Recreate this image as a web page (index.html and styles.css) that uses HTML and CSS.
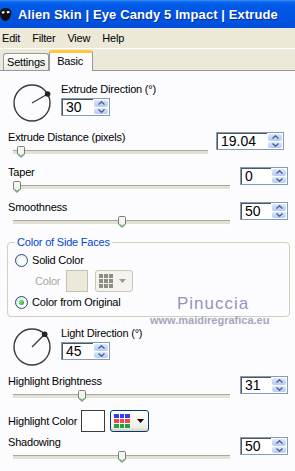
FILE: index.html
```html
<!DOCTYPE html>
<html>
<head>
  <meta charset="utf-8">
  <link rel="stylesheet" href="styles.css">
</head>
<body>
  <div class="titlebar">
    <svg class="app-icon" width="13" height="16" viewBox="0 0 13 16">
      <path d="M0 7 C0 3 3 2 6 2 C10 2 12 5 11 9 C10 12 8 15 5 15 C2 15 0 11 0 7 Z" fill="#111"/>
      <path d="M1.5 6.5 C2.5 5 4 5 5 6 L3 8 Z" fill="#fff"/>
      <path d="M6.5 5.5 C8 4.5 9.5 5 10 6.5 L7.5 7.5 Z" fill="#fff"/>
    </svg>
    <span class="title">Alien Skin | Eye Candy 5 Impact | Extrude</span>
  </div>

  <div class="menubar">
    <span>Edit</span>
    <span>Filter</span>
    <span>View</span>
    <span>Help</span>
  </div>

  <div class="tabs">
    <div class="tab">Settings</div>
    <div class="tab active">Basic</div>
  </div>

  <div class="panel">
    <div class="dial-row">
      <svg class="dial" width="40" height="40" viewBox="0 0 40 40">
        <circle cx="20" cy="20" r="18" fill="none" stroke="#3a3a3a" stroke-width="1.4"/>
        <line x1="20" y1="20" x2="35.6" y2="11" stroke="#3a3a3a" stroke-width="1.3"/>
        <circle cx="35.6" cy="11" r="2.8" fill="#222"/>
      </svg>
      <div class="dial-fields">
        <div class="label">Extrude Direction (°)</div>
        <div class="spin">
          <span class="spin-value">30</span>
          <span class="spin-btns">
            <span><svg width="7" height="4" viewBox="0 0 7 4"><polyline points="0.5,3.5 3.5,0.8 6.5,3.5" fill="none" stroke="#4D6185" stroke-width="1.4"/></svg></span>
            <span><svg width="7" height="4" viewBox="0 0 7 4"><polyline points="0.5,0.5 3.5,3.2 6.5,0.5" fill="none" stroke="#4D6185" stroke-width="1.4"/></svg></span>
          </span>
        </div>
      </div>
    </div>

    <div class="param wide">
      <div class="label">Extrude Distance (pixels)</div>
      <div class="slider"><span class="thumb" style="left: calc((100% - 8px) * 0.019)"><svg width="8" height="12" viewBox="0 0 8 12"><path d="M0.5 1.5 Q0.5 0.5 1.5 0.5 H6.5 Q7.5 0.5 7.5 1.5 V8 L4 11.5 L0.5 8 Z" fill="#F4F4F0" stroke="#7C7C7C"/><polyline points="1.5,8.2 4,10.4 6.5,8.2" fill="none" stroke="#2EA62E"/></svg></span></div>
      <div class="spin">
        <span class="spin-value">19.04</span>
        <span class="spin-btns">
          <span><svg width="7" height="4" viewBox="0 0 7 4"><polyline points="0.5,3.5 3.5,0.8 6.5,3.5" fill="none" stroke="#4D6185" stroke-width="1.4"/></svg></span>
          <span><svg width="7" height="4" viewBox="0 0 7 4"><polyline points="0.5,0.5 3.5,3.2 6.5,0.5" fill="none" stroke="#4D6185" stroke-width="1.4"/></svg></span>
        </span>
      </div>
    </div>

    <div class="param">
      <div class="label">Taper</div>
      <div class="slider"><span class="thumb" style="left: calc((100% - 8px) * 0)"><svg width="8" height="12" viewBox="0 0 8 12"><path d="M0.5 1.5 Q0.5 0.5 1.5 0.5 H6.5 Q7.5 0.5 7.5 1.5 V8 L4 11.5 L0.5 8 Z" fill="#F4F4F0" stroke="#7C7C7C"/><polyline points="1.5,8.2 4,10.4 6.5,8.2" fill="none" stroke="#2EA62E"/></svg></span></div>
      <div class="spin">
        <span class="spin-value">0</span>
        <span class="spin-btns">
          <span><svg width="7" height="4" viewBox="0 0 7 4"><polyline points="0.5,3.5 3.5,0.8 6.5,3.5" fill="none" stroke="#4D6185" stroke-width="1.4"/></svg></span>
          <span><svg width="7" height="4" viewBox="0 0 7 4"><polyline points="0.5,0.5 3.5,3.2 6.5,0.5" fill="none" stroke="#4D6185" stroke-width="1.4"/></svg></span>
        </span>
      </div>
    </div>

    <div class="param">
      <div class="label">Smoothness</div>
      <div class="slider"><span class="thumb" style="left: calc((100% - 8px) * 0.5)"><svg width="8" height="12" viewBox="0 0 8 12"><path d="M0.5 1.5 Q0.5 0.5 1.5 0.5 H6.5 Q7.5 0.5 7.5 1.5 V8 L4 11.5 L0.5 8 Z" fill="#F4F4F0" stroke="#7C7C7C"/><polyline points="1.5,8.2 4,10.4 6.5,8.2" fill="none" stroke="#2EA62E"/></svg></span></div>
      <div class="spin">
        <span class="spin-value">50</span>
        <span class="spin-btns">
          <span><svg width="7" height="4" viewBox="0 0 7 4"><polyline points="0.5,3.5 3.5,0.8 6.5,3.5" fill="none" stroke="#4D6185" stroke-width="1.4"/></svg></span>
          <span><svg width="7" height="4" viewBox="0 0 7 4"><polyline points="0.5,0.5 3.5,3.2 6.5,0.5" fill="none" stroke="#4D6185" stroke-width="1.4"/></svg></span>
        </span>
      </div>
    </div>

    <fieldset class="group">
      <legend>Color of Side Faces</legend>
      <div class="radio-row">
        <span class="radio"></span>
        <span>Solid Color</span>
      </div>
      <div class="color-row">
        <span class="muted">Color</span>
        <span class="swatch"></span>
        <span class="picker">
          <span class="grid-icon">
            <i></i><i></i><i></i><i></i><i></i><i></i><i></i><i></i><i></i>
          </span>
          <svg class="caret" width="7" height="4" viewBox="0 0 7 4"><path d="M0 0 H7 L3.5 4 Z" fill="#9C9A90"/></svg>
        </span>
      </div>
      <div class="radio-row">
        <span class="radio checked"></span>
        <span>Color from Original</span>
      </div>
    </fieldset>

    <div class="dial-row second">
      <svg class="dial" width="40" height="40" viewBox="0 0 40 40">
        <circle cx="20" cy="20" r="18" fill="none" stroke="#3a3a3a" stroke-width="1.4"/>
        <line x1="20" y1="20" x2="32.7" y2="7.3" stroke="#3a3a3a" stroke-width="1.3"/>
        <circle cx="32.7" cy="7.3" r="2.8" fill="#222"/>
      </svg>
      <div class="dial-fields">
        <div class="label">Light Direction (°)</div>
        <div class="spin">
          <span class="spin-value">45</span>
          <span class="spin-btns">
            <span><svg width="7" height="4" viewBox="0 0 7 4"><polyline points="0.5,3.5 3.5,0.8 6.5,3.5" fill="none" stroke="#4D6185" stroke-width="1.4"/></svg></span>
            <span><svg width="7" height="4" viewBox="0 0 7 4"><polyline points="0.5,0.5 3.5,3.2 6.5,0.5" fill="none" stroke="#4D6185" stroke-width="1.4"/></svg></span>
          </span>
        </div>
      </div>
    </div>

    <div class="param">
      <div class="label">Highlight Brightness</div>
      <div class="slider"><span class="thumb" style="left: calc((100% - 8px) * 0.31)"><svg width="8" height="12" viewBox="0 0 8 12"><path d="M0.5 1.5 Q0.5 0.5 1.5 0.5 H6.5 Q7.5 0.5 7.5 1.5 V8 L4 11.5 L0.5 8 Z" fill="#F4F4F0" stroke="#7C7C7C"/><polyline points="1.5,8.2 4,10.4 6.5,8.2" fill="none" stroke="#2EA62E"/></svg></span></div>
      <div class="spin">
        <span class="spin-value">31</span>
        <span class="spin-btns">
          <span><svg width="7" height="4" viewBox="0 0 7 4"><polyline points="0.5,3.5 3.5,0.8 6.5,3.5" fill="none" stroke="#4D6185" stroke-width="1.4"/></svg></span>
          <span><svg width="7" height="4" viewBox="0 0 7 4"><polyline points="0.5,0.5 3.5,3.2 6.5,0.5" fill="none" stroke="#4D6185" stroke-width="1.4"/></svg></span>
        </span>
      </div>
    </div>

    <div class="color-field">
      <span class="label">Highlight Color</span>
      <span class="swatch white"></span>
      <span class="picker active">
        <span class="grid-icon colored">
          <i></i><i></i><i></i><i></i><i></i><i></i><i></i><i></i><i></i>
        </span>
        <svg class="caret" width="7" height="4" viewBox="0 0 7 4"><path d="M0 0 H7 L3.5 4 Z" fill="#000"/></svg>
      </span>
    </div>

    <div class="param tight">
      <div class="label">Shadowing</div>
      <div class="slider"><span class="thumb" style="left: calc((100% - 8px) * 0.5)"><svg width="8" height="12" viewBox="0 0 8 12"><path d="M0.5 1.5 Q0.5 0.5 1.5 0.5 H6.5 Q7.5 0.5 7.5 1.5 V8 L4 11.5 L0.5 8 Z" fill="#F4F4F0" stroke="#7C7C7C"/><polyline points="1.5,8.2 4,10.4 6.5,8.2" fill="none" stroke="#2EA62E"/></svg></span></div>
      <div class="spin">
        <span class="spin-value">50</span>
        <span class="spin-btns">
          <span><svg width="7" height="4" viewBox="0 0 7 4"><polyline points="0.5,3.5 3.5,0.8 6.5,3.5" fill="none" stroke="#4D6185" stroke-width="1.4"/></svg></span>
          <span><svg width="7" height="4" viewBox="0 0 7 4"><polyline points="0.5,0.5 3.5,3.2 6.5,0.5" fill="none" stroke="#4D6185" stroke-width="1.4"/></svg></span>
        </span>
      </div>
    </div>

    <div class="watermark">
      <div class="wm-name">Pinuccia</div>
      <div class="wm-url">www.maidiregrafica.eu</div>
    </div>
  </div>
</body>
</html>
```

FILE: styles.css
```css
* {
  margin: 0;
  padding: 0;
  box-sizing: border-box;
}

body {
  width: 295px;
  height: 471px;
  overflow: hidden;
  display: flex;
  flex-direction: column;
  font-family: 'Liberation Sans', Arial, sans-serif;
  font-size: 11px;
  letter-spacing: -0.2px;
  color: #000;
  background: #ECE9D8;
}

/* window chrome */

.titlebar {
  flex: none;
  height: 28px;
  display: flex;
  align-items: center;
  gap: 5px;
  background: linear-gradient(to bottom, #3D8EF8 0, #0A66EE 2px, #0058E6 7px, #0054E3 60%, #004FD9 100%);
  color: #fff;
}

.app-icon {
  flex: none;
}

.title {
  font-size: 13px;
  font-weight: 700;
  letter-spacing: 0.1px;
  text-shadow: 1px 1px 0 rgba(8, 30, 120, 0.7);
}

.menubar {
  flex: none;
  height: 21px;
  display: flex;
  align-items: center;
  gap: 12px;
  padding-left: 2px;
  border-bottom: 1px solid #fff;
}

.tabs {
  flex: none;
  height: 22px;
  display: flex;
  align-items: flex-end;
  padding-left: 3px;
  border-bottom: 1px solid #919B9C;
}

.tab {
  height: 17px;
  padding: 0 3px;
  line-height: 16px;
  border: 1px solid #919B9C;
  border-bottom: none;
  border-radius: 3px 3px 0 0;
  background: linear-gradient(#fff, #ECEBE6);
}

.tab.active {
  height: 21px;
  margin-bottom: -1px;
  padding: 0 9px 0 7px;
  border-top: 3px solid #FFC83C;
  background: #FCFCFE;
}

/* tab page */

.panel {
  flex: 1;
  position: relative;
  padding: 11px 7px 0 8px;
  background: #FCFCFE;
}

.label {
  line-height: 14px;
  white-space: nowrap;
}

.dial-row {
  display: flex;
  align-items: flex-start;
  gap: 9px;
}

.dial-row.second {
  margin-top: 9px;
}

.dial {
  flex: none;
  margin: 1px 0 0 4px;
}

.dial-fields {
  display: flex;
  flex-direction: column;
  gap: 2px;
}

.dial-fields .spin {
  width: 49px;
}

.param {
  display: grid;
  grid-template-columns: 1fr 48px;
  grid-template-rows: 14px 14px;
  column-gap: 10px;
  margin-top: 7px;
}

.param.wide {
  grid-template-columns: 1fr 68px;
  column-gap: 8px;
  padding-right: 4px;
}

.param.tight {
  margin-top: 3px;
}

.param .label {
  grid-column: 1;
  grid-row: 1;
}

.param .slider {
  grid-column: 1;
  grid-row: 2;
  margin-left: 5px;
}

.param .spin {
  grid-column: 2;
  grid-row: 1 / 3;
  margin-top: 2px;
}

/* spin box */

.spin {
  height: 18px;
  display: flex;
  border: 1px solid #7F9DB9;
  background: #fff;
}

.spin-value {
  flex: 1;
  padding-left: 3px;
  font-size: 14px;
  line-height: 15px;
  letter-spacing: 0;
  border-top: 1px solid #555;
  border-left: 1px solid #555;
}

.spin-btns {
  width: 16px;
  display: flex;
  flex-direction: column;
  gap: 1px;
  padding: 1px;
}

.spin-btns span {
  flex: 1;
  display: flex;
  align-items: center;
  justify-content: center;
  border-radius: 2px;
  background: linear-gradient(#DDE7FC, #B5C9F5);
}

.spin-btns svg {
  display: block;
}

/* trackbar */

.slider {
  position: relative;
  height: 14px;
}

.slider::before {
  content: '';
  position: absolute;
  left: 0;
  right: 0;
  top: 6px;
  height: 3px;
  border-top: 1px solid #A9A79C;
  border-bottom: 1px solid #fff;
  background: #E3E1D6;
}

.thumb {
  position: absolute;
  top: 2px;
}

.thumb svg {
  display: block;
}

/* group box */

.group {
  margin: 7px -2px 0 -1px;
  padding: 0 0 6px 7px;
  border: 1px solid #D0D0BF;
  border-radius: 4px;
}

.group legend {
  padding: 0 2px;
  line-height: 14px;
  color: #0046D5;
}

.radio-row {
  height: 16px;
  display: flex;
  align-items: center;
  gap: 4px;
  margin-top: 2px;
}

.group legend + .radio-row {
  margin-top: 3px;
}

.radio {
  width: 13px;
  height: 13px;
  display: flex;
  align-items: center;
  justify-content: center;
  border: 1px solid #1C5180;
  border-radius: 50%;
  background: radial-gradient(circle at 65% 65%, #fff 30%, #DCDCD4);
}

.radio.checked::after {
  content: '';
  width: 5px;
  height: 5px;
  border-radius: 50%;
  background: radial-gradient(circle at 35% 35%, #7BE77B, #1C961C);
}

.color-row {
  height: 22px;
  display: flex;
  align-items: center;
  margin-top: 2px;
  padding-left: 20px;
}

.muted {
  width: 31px;
  color: #ACA899;
}

.swatch {
  width: 22px;
  height: 22px;
  border: 1px solid #C4C2B6;
  background: #ECE9D8;
}

.picker {
  width: 38px;
  height: 22px;
  display: flex;
  align-items: center;
  margin-left: 7px;
  padding-left: 3px;
  border: 1px solid #CAC8BB;
  border-radius: 3px;
  background: #F4F3EE;
}

.grid-icon {
  width: 14px;
  height: 14px;
  display: grid;
  grid-template-columns: repeat(3, 4px);
  grid-template-rows: repeat(3, 4px);
  gap: 1px;
}

.grid-icon i {
  background: #8E8C85;
}

.caret {
  margin-left: 6px;
}

.color-field {
  height: 22px;
  display: flex;
  align-items: center;
  margin-top: 8px;
}

.color-field .label {
  width: 73px;
}

.swatch.white {
  width: 24px;
  border-color: #3C3C3C;
  background: #fff;
}

.picker.active {
  width: 39px;
  margin-left: 5px;
  padding-left: 3px;
  border-color: #003C74;
  background: linear-gradient(#fff, #F1EFE6 80%, #D8D2C2);
}

.grid-icon.colored {
  width: 16px;
  grid-template-columns: repeat(3, 4.6px);
}

.grid-icon.colored i:nth-child(-n+3) {
  background: #3A3AF5;
}

.grid-icon.colored i:nth-child(n+4) {
  background: #F04848;
}

.grid-icon.colored i:nth-child(n+7) {
  background: #22A04A;
}

.picker.active .caret {
  margin-left: 7px;
}

/* watermark over the page */

.watermark {
  position: absolute;
  left: 150px;
  top: 223px;
  color: #9494B8;
  letter-spacing: 0;
}

.wm-name {
  padding-left: 27px;
  font-size: 17px;
  line-height: 20px;
  letter-spacing: 1px;
  text-shadow: 0 0 2px #fff;
}

.wm-url {
  font-size: 11px;
  line-height: 12px;
  font-weight: 700;
  color: #A4A4BC;
  text-shadow: 0 0 1px #fff;
}
```
